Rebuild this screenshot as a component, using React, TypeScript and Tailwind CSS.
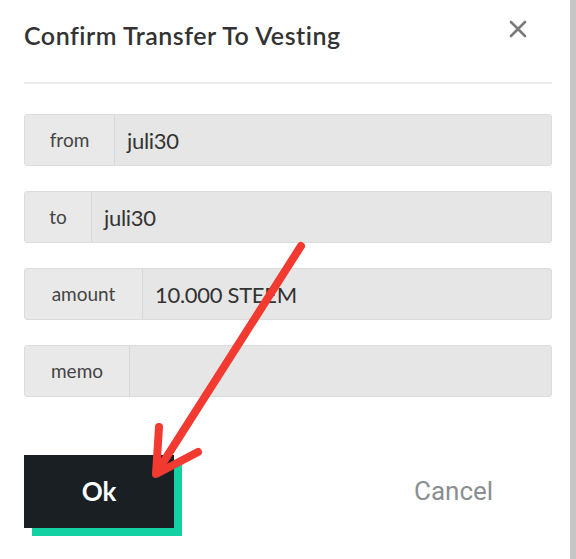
import React from 'react'

const rows = [
  { label: 'from', value: 'juli30', w: 'w-[90px]' },
  { label: 'to', value: 'juli30', w: 'w-[67px]' },
  { label: 'amount', value: '10.000 STEEM', w: 'w-[118px]' },
  { label: 'memo', value: '', w: 'w-[105px]' }
]

function Field({ label, value, w }: { label: string; value: string; w: string }) {
  return (
    <div className="flex h-[52px] overflow-hidden rounded-[3px] border border-[#dcdcdc] bg-[#e6e6e6]">
      <div className={`${w} flex shrink-0 items-center justify-center border-r border-[#d6d6d6] bg-[#e9e9e9] text-[19px] text-[#444]`}>
        {label}
      </div>
      <div className="flex flex-1 items-center pl-3 text-[22px] tracking-[-0.3px] text-[#333]">{value}</div>
    </div>
  )
}

export default function App() {
  return (
    <div className="relative flex h-[559px] w-[576px] bg-white font-['Lato','Noto_Sans',sans-serif]">
      <div className="w-[570px] shrink-0">
        <div className="flex h-[82px] items-start justify-between pl-6 pr-[43px] pt-[19px]">
          <h1 className="text-[25px] leading-[32px] font-semibold tracking-[0.5px] text-[#333]">Confirm Transfer To Vesting</h1>
          <svg className="mt-[1px]" width="18" height="18" viewBox="0 0 18 18">
            <path d="M2 2 L16 16 M16 2 L2 16" stroke="#7a7a7a" strokeWidth="2.6" strokeLinecap="round" />
          </svg>
        </div>
        <div className="ml-6 mr-[18px] h-[2px] bg-[#ececec]" />
        <div className="ml-6 mr-[18px] mt-[30px] flex flex-col gap-[25px]">
          {rows.map((r) => (
            <Field key={r.label} {...r} />
          ))}
        </div>
        <div className="mt-[58px] flex items-center pl-6">
          <div className="h-[73px] w-[150px] bg-[#1a1f24] text-center text-[26px] leading-[73px] font-bold text-white shadow-[8px_8px_0_0_#14d1a4]">
            Ok
          </div>
          <div className="ml-[240px] font-['Roboto',sans-serif] text-[26px] text-[#8a8f94]">Cancel</div>
        </div>
      </div>
      <div className="w-[6px] bg-[#c6c6c6]" />
      <svg className="pointer-events-none absolute inset-0" width="576" height="559" viewBox="0 0 576 559">
        <g stroke="#f23a30" strokeWidth="8" strokeLinecap="round" strokeLinejoin="round" fill="none">
          <path d="M301 246 L157 472" />
          <path d="M159 427 L156 474 L198 452" />
        </g>
      </svg>
    </div>
  )
}
